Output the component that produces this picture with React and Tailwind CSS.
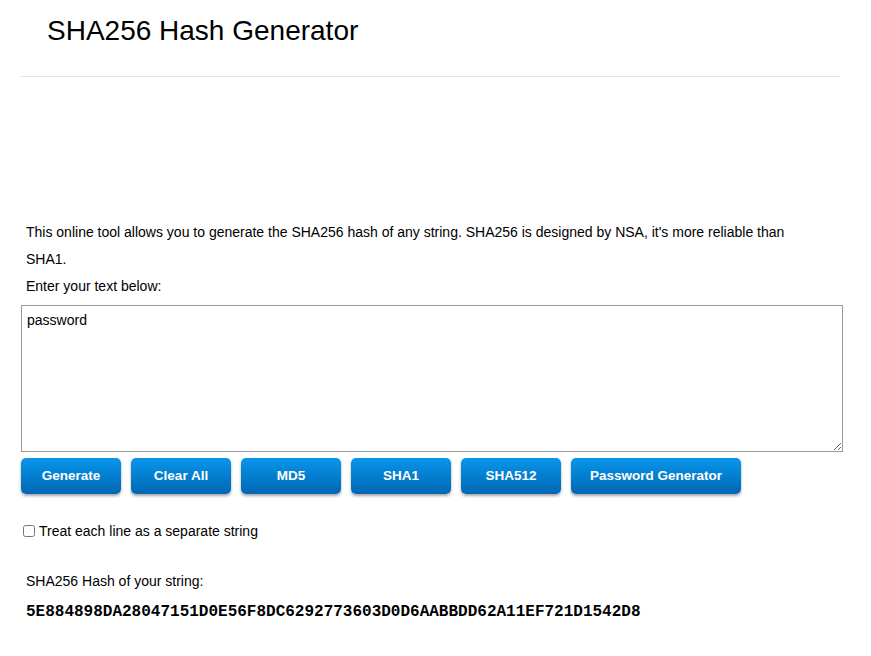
import { useState } from 'react';

const buttons = [
  { label: 'Generate', w: 'w-[100px]' },
  { label: 'Clear All', w: 'w-[100px]' },
  { label: 'MD5', w: 'w-[100px]' },
  { label: 'SHA1', w: 'w-[100px]' },
  { label: 'SHA512', w: 'w-[100px]' },
  { label: 'Password Generator', w: 'w-[170px]' },
];

const App = () => {
  const [text, setText] = useState('password');
  const [perLine, setPerLine] = useState(false);

  return (
    <div className="min-h-[656px] bg-white text-black font-['Liberation_Sans',Arial,sans-serif]">
      <div className="mx-[20px] w-[820px] border-b border-[#e6e6e6] pt-[13px] pb-[27px]">
        <h1 className="pl-[27px] text-[28px] leading-[36px] font-normal">SHA256 Hash Generator</h1>
      </div>

      <div className="pl-[21px] pt-[142px] w-[843px]">
        <p className="pl-[5px] pr-[40px] text-[14px] leading-[27px]">
          This online tool allows you to generate the SHA256 hash of any string. SHA256 is designed by NSA, it's more reliable than SHA1.
        </p>
        <p className="pl-[5px] text-[14px] leading-[27px]">Enter your text below:</p>

        <textarea
          value={text}
          onChange={(e) => setText(e.target.value)}
          className="mt-[5px] block w-[822px] h-[147px] border border-[#999] px-[5px] py-[5px] text-[14px] leading-[18px] outline-none resize"
        />

        <div className="flex gap-[10px] mt-[6px]">
          {buttons.map((b) => (
            <button
              key={b.label}
              className={`${b.w} h-[36px] rounded-[5px] bg-gradient-to-b from-[#0a96ec] to-[#0067b3] text-white text-[13.5px] font-bold shadow-[0_2px_3px_rgba(0,0,0,0.35)]`}
            >
              {b.label}
            </button>
          ))}
        </div>

        <label className="flex items-center mt-[28px] ml-[2px] text-[14px] leading-[18px]">
          <input
            type="checkbox"
            checked={perLine}
            onChange={(e) => setPerLine(e.target.checked)}
            className="w-[12px] h-[12px] mr-[4px]"
          />
          Treat each line as a separate string
        </label>

        <p className="pl-[5px] mt-[32px] text-[14px] leading-[18px]">SHA256 Hash of your string:</p>
        <p className="pl-[5px] mt-[12px] text-[16px] leading-[20px] font-bold font-['Liberation_Mono','Courier_New',monospace]">
          5E884898DA28047151D0E56F8DC6292773603D0D6AABBDD62A11EF721D1542D8
        </p>
      </div>
    </div>
  );
};

export default App;
